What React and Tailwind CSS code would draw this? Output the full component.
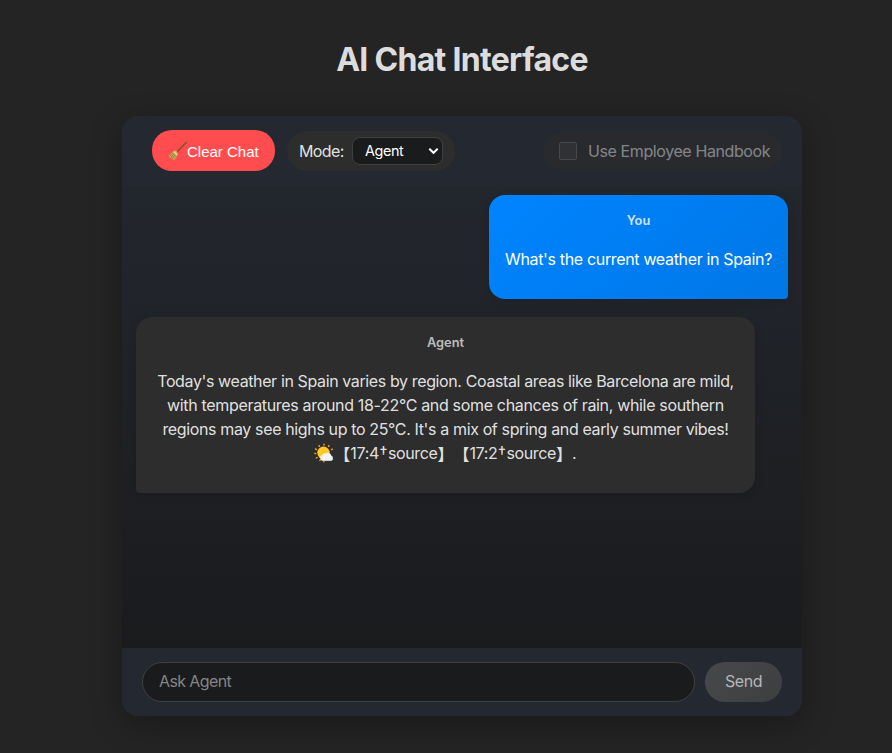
import React from 'react';

function Broom() {
  return (
    <svg width="20" height="20" viewBox="0 0 20 20" className="mt-px block shrink-0">
      <path d="M18.300 1.500 9 10.800" stroke="#80502f" strokeWidth="1.500" strokeLinecap="round" />
      <path d="M6.200 9.700c2-.6 4 1.300 3.500 3.300-.5 2.300-1.600 4-3.300 5.800C3.800 18.500 1.400 16.600.6 14.200 2.900 13.600 4.200 11 6.200 9.700z" fill="#c9a956" />
      <path d="M4.800 12.200l3 3.500M3.500 13.400l2.900 3.800M2.200 14.300l2.800 3.500" stroke="#80652f" strokeWidth=".7" />
      <path d="M5.900 10.600l3.100 3.200" stroke="#f0dda0" strokeWidth="1.200" />
    </svg>
  );
}

function SunCloud() {
  return (
    <svg width="20" height="20" viewBox="0 0 20 20" className="block shrink-0">
      <g stroke="#f6a51b" strokeWidth="1.400" strokeLinecap="round">
        <path d="M10 1.200v.8M5 2.600l.5.800M15 2.600l-.5.800M1.500 6l.9.400M18.400 6.200l-.9.400M.9 10.500h.8M2.300 15l.8-.5M6 17.500l.3-.7M9.900 18.700v-.5" />
      </g>
      <circle cx="9.500" cy="9.800" r="6.200" fill="#ffc928" />
      <path d="M8.700 17.700a2.900 2.900 0 0 1-.4-5.700 3 3 0 0 1 3.700-1.400 3.200 3.200 0 0 1 5.200 2 2.700 2.700 0 0 1-.2 5.100z" fill="#f2f4f8" />
      <path d="M7 16.800c1 .9 2 .9 3 .9h7c1 0 2-.6 2.300-1.600-2.500 1.200-8 1.500-12.300.7z" fill="#cfd8e4" />
    </svg>
  );
}

function Source({ id }) {
  return (
    <span className="flex items-center">
      <span className="w-4 text-right font-['Noto_Sans_CJK_SC'] leading-6 font-bold">【</span>
      <span className="flex tracking-[-0.36px]">
        {id}
        <span className="relative -top-px w-[9px] text-center tracking-normal">†</span>
        source
      </span>
      <span className="w-4 font-['Noto_Sans_CJK_SC'] leading-6 font-bold">】</span>
    </span>
  );
}

export default function App() {
  return (
    <div className="flex h-[753px] w-[892px] flex-col items-center overflow-hidden bg-[#242424] pl-8 font-['Inter','Noto_Sans_CJK_SC',sans-serif] text-base leading-6 text-white/87">
      <h1 className="mt-[42px] h-[35px] text-[32px] leading-[35px] font-bold tracking-[-0.7px] whitespace-nowrap">AI Chat Interface</h1>
      <main className="mt-[39px] flex h-[600px] w-[680px] shrink-0 flex-col overflow-hidden rounded-2xl shadow-[0_8px_32px_rgba(0,0,0,0.3)]">
        <div className="flex flex-1 flex-col bg-linear-to-b from-[#242830] to-[#1a1b1d]">
          <header className="flex h-[70px] shrink-0 items-center bg-[#242830] pr-5 pl-[30px]">
            <button className="mb-0.5 flex h-[41px] w-[123px] items-center rounded-[20px] bg-[#ff4d4f] pl-4 font-['Liberation_Sans',sans-serif] text-[15px] text-white">
              <Broom />
              <span className="-ml-px pt-[3px] whitespace-nowrap">Clear Chat</span>
            </button>
            <div className="ml-3 flex h-10 w-[168px] items-center rounded-[20px] bg-[#2d2d2d] pl-3">
              <span className="w-[53px] tracking-[-0.600px] whitespace-nowrap">Mode:</span>
              <div className="mb-px flex h-7 w-[91px] items-center justify-between rounded-lg border border-[#404040] bg-[#1a1b1d] pr-[3px] pl-3 text-white">
                <span className="pt-px text-[14.400px] tracking-[-0.400px]">Agent</span>
                <svg width="11" height="8" viewBox="0 0 11 8" fill="none">
                  <path d="M1.300 1.800 5.500 5.800 9.700 1.800" stroke="currentColor" strokeWidth="2" />
                </svg>
              </div>
            </div>
            <label className="ml-auto flex h-9 w-[239px] items-center rounded-[20px] bg-[#2d2d2d] pl-4 opacity-50">
              <span className="h-[18px] w-[18px] rounded-[2px] border border-[#686868] bg-[#3b3b3b]" />
              <span className="ml-[11px] tracking-[-0.4px] whitespace-nowrap">Use Employee Handbook</span>
            </label>
          </header>
          <section className="flex flex-1 flex-col px-[14px] pt-[9px]">
            <article className="flex h-[104px] w-[299px] shrink-0 flex-col items-center self-end rounded-2xl rounded-br-[4px] bg-linear-135 from-[#0084ff] to-[#0077e6] text-white shadow-[0_2px_8px_rgba(0,0,0,0.1)]">
              <strong className="mt-4 h-5 text-[12.800px] leading-5 font-semibold opacity-80">You</strong>
              <p className="mt-4 tracking-[-0.34px] whitespace-nowrap">What's the current weather in Spain?</p>
            </article>
            <article className="mt-[18px] flex h-[176px] w-[619px] shrink-0 flex-col items-center self-start rounded-2xl rounded-bl-[4px] bg-[#2d2d2d] shadow-[0_2px_8px_rgba(0,0,0,0.1)]">
              <strong className="mt-4 h-5 text-[12.800px] leading-5 font-semibold opacity-80">Agent</strong>
              <div className="mt-4 flex flex-col items-center whitespace-nowrap">
                <p className="tracking-[-0.38px]">Today's weather in Spain varies by region. Coastal areas like Barcelona are mild,</p>
                <p className="tracking-[-0.33px]">with temperatures around 18-22°C and some chances of rain, while southern</p>
                <p className="tracking-[-0.365px]">regions may see highs up to 25°C. It's a mix of spring and early summer vibes!</p>
                <div className="flex h-6 items-center">
                  <SunCloud />
                  <Source id="17:4" />
                  <Source id="17:2" />
                  <span>.</span>
                </div>
              </div>
            </article>
          </section>
        </div>
        <footer className="flex h-[68px] shrink-0 items-center gap-[10px] bg-[#242830] px-5">
          <div className="flex h-10 flex-1 items-center rounded-[20px] border border-[#404040] bg-[#1a1b1d] pl-4 text-[#858585]">
            <span className="pb-0.5 tracking-[-0.6px]">Ask Agent</span>
          </div>
          <button className="h-10 w-[77px] rounded-[20px] bg-linear-135 from-[#48494b] to-[#3d3e40] pb-0.5 tracking-[-0.4px] text-[#b5b6b8]">Send</button>
        </footer>
      </main>
    </div>
  );
}
